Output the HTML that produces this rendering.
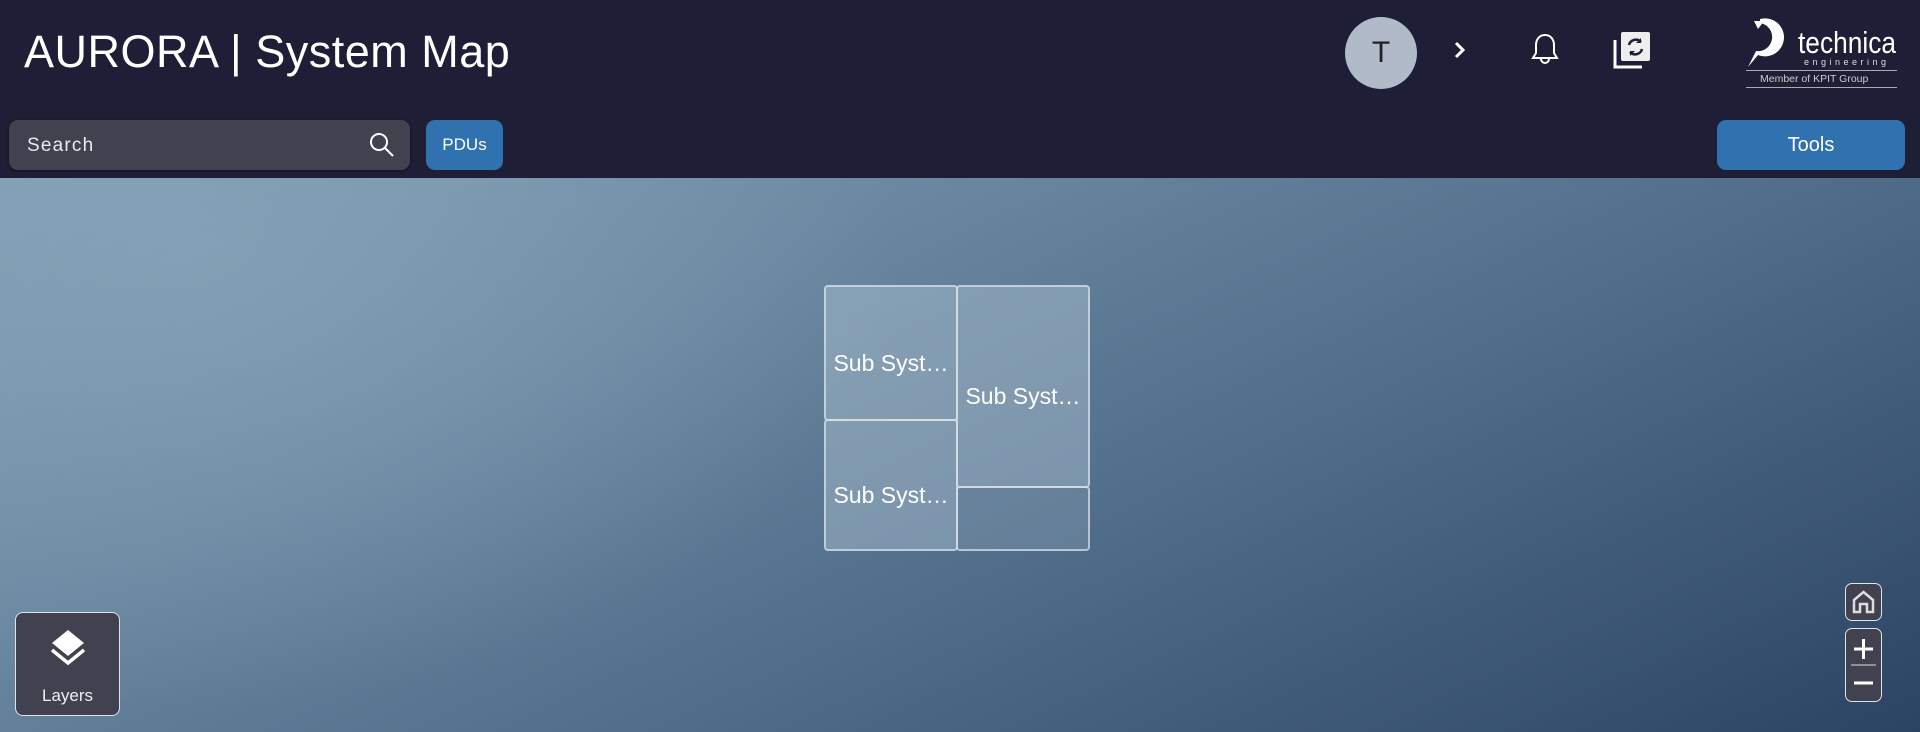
<!DOCTYPE html>
<html><head><meta charset="utf-8"><style>
*{box-sizing:border-box;margin:0;padding:0}
body{width:1920px;height:732px;overflow:hidden;font-family:"Liberation Sans",sans-serif;position:relative;background:#1e1e37}
.hdr{position:absolute;left:0;top:0;width:1920px;height:178px;background:#1e1e37}
.title{position:absolute;left:24px;top:26px;font-size:45px;color:#fff;letter-spacing:0.5px}
.search{position:absolute;left:9px;top:120px;width:401px;height:50px;background:#41414f;border-radius:9px;box-shadow:0 1px 3px rgba(0,0,0,.5)}
.search span{position:absolute;left:18px;top:15px;font-size:19px;color:#e8e8ee;letter-spacing:1.2px}
.pdus{position:absolute;left:426px;top:120px;width:77px;height:50px;background:#3071b0;border-radius:9px;color:#fff;font-size:17px;text-align:center;line-height:50px}
.tools{position:absolute;left:1717px;top:120px;width:188px;height:50px;background:#3071b0;border-radius:9px;color:#fff;font-size:20px;text-align:center;line-height:50px}
.avatar{position:absolute;left:1345px;top:17px;width:72px;height:72px;border-radius:50%;background:#b1bac8;color:#222;font-size:30px;text-align:center;line-height:72px}
.map{position:absolute;left:0;top:178px;width:1920px;height:554px;
background:radial-gradient(ellipse 700px 450px at 200px 80px,rgba(140,170,190,.55),rgba(140,170,190,0)),linear-gradient(155deg,#7e9db2 0%,#6a88a1 30%,#4f6c89 60%,#2c4464 100%)}
.box{position:absolute;border:2px solid rgba(220,228,236,.7);border-radius:4px;background:rgba(175,195,210,.45);color:#fff;font-size:23px;display:flex;align-items:center;justify-content:center;white-space:nowrap;padding-top:20px}
.layers{position:absolute;left:15px;top:612px;width:105px;height:104px;background:#41414f;border:1.5px solid #dfe3ea;border-radius:8px;color:#eee;font-size:17px;text-align:center}
.ctl{position:absolute;left:1845px;width:37px;background:#41414f;border:1.5px solid #dfe3ea;border-radius:7px}
</style></head><body>
<div class="hdr">
<div class="title">AURORA | System Map</div>
<div class="avatar">T</div>
<svg style="position:absolute;left:1452px;top:40px" width="16" height="20" viewBox="0 0 16 20"><path d="M4 3l7 7-7 7" stroke="#fff" stroke-width="3" fill="none"/></svg>
<svg style="position:absolute;left:1530px;top:32px" width="30" height="36" viewBox="0 0 30 36"><path d="M15 3c-6 0-9 5-9 10v8l-3 5h24l-3-5v-8c0-5-3-10-9-10z M11 27a4 4 0 0 0 8 0" stroke="#fff" stroke-width="2" fill="none"/></svg>
<svg style="position:absolute;left:1612px;top:30px" width="40" height="40" viewBox="0 0 40 40"><path d="M3 10v27h27" stroke="#fff" stroke-width="3" fill="none"/><rect x="9" y="2" width="29" height="29" rx="2" fill="#eee"/><path d="M17 15a7 7 0 0 1 12-3 M30 19a7 7 0 0 1-12 3" stroke="#1e1e37" stroke-width="2.5" fill="none"/><path d="M29 8v5h-5z M18 26v-5h5z" fill="#1e1e37"/></svg>
<svg style="position:absolute;left:1746px;top:17px" width="154" height="72" viewBox="0 0 154 72"><path d="M14 2a19 19 0 1 1-2 36l-10 12 8-16a13 13 0 1 0 4-28z" fill="#fff"/><path d="M8 4h10l-6 8z" fill="#fff"/><text x="52" y="36" fill="#fff" font-size="31" textLength="98" lengthAdjust="spacingAndGlyphs">technica</text><text x="58" y="48" fill="#ddd" font-size="9" textLength="82" lengthAdjust="spacing">engineering</text><rect x="0" y="53" width="151" height="1" fill="#aaa"/><text x="14" y="65" fill="#ccc" font-size="10.5">Member of KPIT Group</text><rect x="0" y="70" width="151" height="1" fill="#aaa"/></svg>
<div class="search"><span>Search</span><svg style="position:absolute;left:360px;top:12px" width="26" height="26" viewBox="0 0 26 26"><circle cx="10" cy="10" r="8" stroke="#fff" stroke-width="2" fill="none"/><path d="M16 16l8 8" stroke="#fff" stroke-width="2"/></svg></div>
<div class="pdus">PDUs</div>
<div class="tools">Tools</div>
</div>
<div class="map"></div>
<div class="box" style="left:824px;top:285px;width:134px;height:136px">Sub Syst…</div>
<div class="box" style="left:824px;top:419px;width:134px;height:132px">Sub Syst…</div>
<div class="box" style="left:956px;top:285px;width:134px;height:203px">Sub Syst…</div>
<div class="box" style="left:956px;top:486px;width:134px;height:65px;background:rgba(150,170,190,.3)"></div>
<div class="layers"><svg style="position:absolute;left:33px;top:15px" width="38" height="38" viewBox="0 0 38 38"><path d="M19 2l16 13-16 13L3 15z" fill="#fff"/><path d="M3 22l16 13 16-13" stroke="#fff" stroke-width="3.5" fill="none"/></svg><div style="position:absolute;left:0;right:0;top:73px">Layers</div></div>
<div class="ctl" style="top:583px;height:38px"><svg style="position:absolute;left:5px;top:5px" width="25" height="25" viewBox="0 0 25 25"><path d="M3 11L12.5 3 22 11v12h-6v-8h-7v8H3z" stroke="#ddd" stroke-width="2.5" fill="none"/></svg></div>
<div class="ctl" style="top:628px;height:74px"><svg style="position:absolute;left:0;top:0" width="35" height="72" viewBox="0 0 35 72"><path d="M8 20h19M17.5 10v20" stroke="#fff" stroke-width="3"/><path d="M5 36h25" stroke="#ddd" stroke-width="1"/><path d="M8 54h19" stroke="#fff" stroke-width="3"/></svg></div>
</body></html>
